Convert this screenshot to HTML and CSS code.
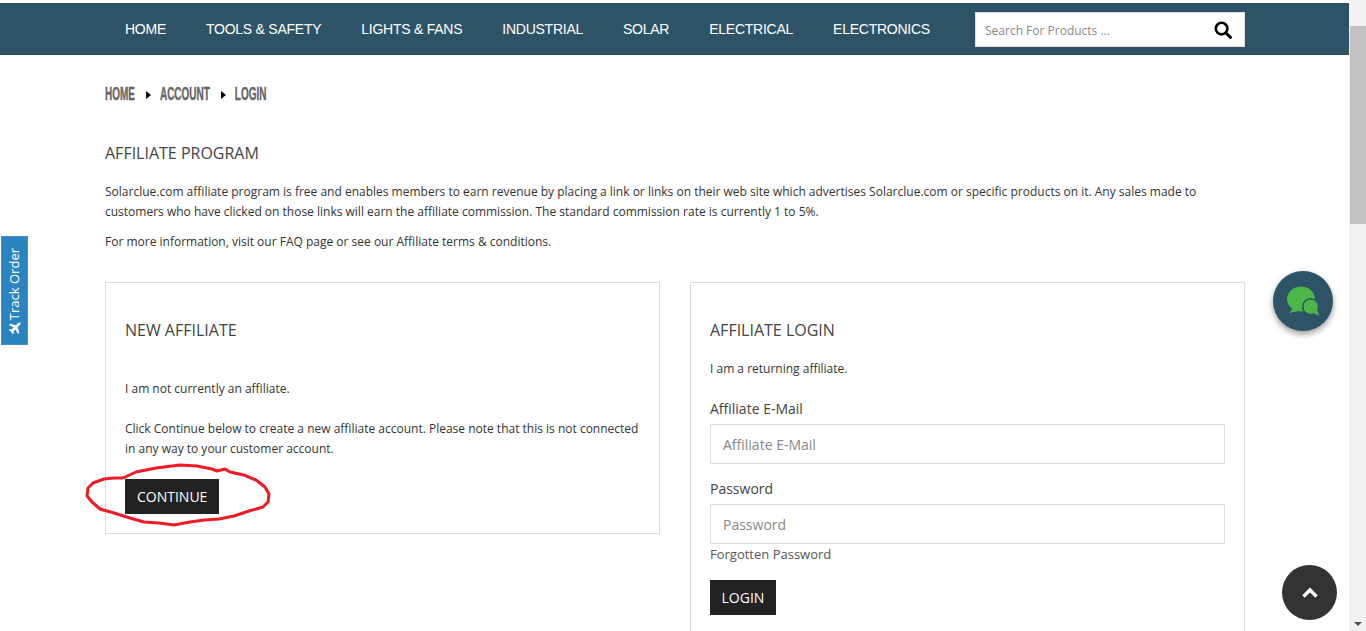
FILE: index.html
```html
<!DOCTYPE html>
<html lang="en">
<head>
<meta charset="utf-8">
<title>Affiliate Program</title>
<link rel="stylesheet" href="styles.css">
</head>
<body>
<div class="frame">
  <div class="page">
    <header class="topbar">
      <nav class="nav">
        <a>HOME</a><a>TOOLS &amp; SAFETY</a><a>LIGHTS &amp; FANS</a><a>INDUSTRIAL</a><a>SOLAR</a><a>ELECTRICAL</a><a>ELECTRONICS</a>
      </nav>
      <div class="search">
        <span class="search-text">Search For Products ...</span>
        <svg class="search-icon" viewBox="0 0 18 18" width="18" height="18"><circle cx="7.6" cy="7.6" r="5.8" fill="none" stroke="#000" stroke-width="2.6"/><path d="M11.8 11.8L16.4 16.4" stroke="#000" stroke-width="3" stroke-linecap="round"/></svg>
      </div>
    </header>
    <main class="content">
      <div class="crumbs">
        <span>HOME</span><i class="tri"></i><span>ACCOUNT</span><i class="tri"></i><span>LOGIN</span>
      </div>
      <h1 class="title">AFFILIATE PROGRAM</h1>
      <p class="para first">Solarclue.com affiliate program is free and enables members to earn revenue by placing a link or links on their web site which advertises Solarclue.com or specific products on it. Any sales made to customers who have clicked on those links will earn the affiliate commission. The standard commission rate is currently 1 to 5%.</p>
      <p class="para second">For more information, visit our FAQ page or see our Affiliate terms &amp; conditions.</p>
      <div class="cols">
        <section class="card card-new">
          <h2 class="card-title">NEW AFFILIATE</h2>
          <p class="para gap-a">I am not currently an affiliate.</p>
          <p class="para gap-b">Click Continue below to create a new affiliate account. Please note that this is not connected in any way to your customer account.</p>
          <a class="btn btn-continue">CONTINUE</a>
        </section>
        <section class="card card-login">
          <h2 class="card-title">AFFILIATE LOGIN</h2>
          <p class="para gap-c">I am a returning affiliate.</p>
          <label class="lbl">Affiliate E-Mail</label>
          <div class="input">Affiliate E-Mail</div>
          <label class="lbl lbl-pass">Password</label>
          <div class="input">Password</div>
          <div class="forgot">Forgotten Password</div>
          <a class="btn btn-login">LOGIN</a>
        </section>
      </div>
    </main>
    <svg class="scribble" viewBox="0 0 190 66" width="190" height="66"><path d="M39 15L52 9 72 5 96 2 113 3 128 6 133 8 141 6 146 9 160 12 172 17 181 24 185 31 184 39 179 44 165 48 150 53 135 56 120 57 106 59 90 62 75 60 60 59 46 55 30 50 16 46 8 39 3 33 4 25 9 20 20 16 30 15Z" fill="none" stroke="#ed1c24" stroke-width="3" stroke-linejoin="round"/></svg>
    <a class="track"><svg class="plane" viewBox="0 0 14 14" width="13" height="13"><path d="M13.4 1.2C12.7.3 11.4.5 10.4 1.5L8.3 3.6 2.4 1.9 1.1 3.2 5.9 6 3.900 8 1.900 7.700.9 8.700 3.400 10.600 5.300 13.100 6.300 12.100 6 10.100 8 8.100 10.800 12.900 12.100 11.600 10.400 5.700 12.500 3.600C13.500 2.600 14 1.900 13.400 1.200Z" fill="#fff"/></svg><span class="track-text">Track Order</span></a>
    <a class="chat"><svg viewBox="0 0 34 30" width="34" height="30"><ellipse cx="15" cy="13" rx="14" ry="12.500" fill="#4cb648"/><path d="M8 21L3 27 13 25Z" fill="#4cb648"/><circle cx="24.700" cy="20.700" r="8" fill="#4cb648" stroke="#2f5366" stroke-width="1.600"/><path d="M27 27L33.500 29.500 31 24Z" fill="#4cb648"/></svg></a>
    <a class="totop"><svg viewBox="0 0 18 12" width="18" height="12"><path d="M2.500 9.500L9 3l6.500 6.500" fill="none" stroke="#fff" stroke-width="3.400"/></svg></a>
  </div>
  <div class="scrollbar">
    <div class="thumb"></div>
    <div class="arrow-down"></div>
  </div>
</div>
</body>
</html>
```
FILE: styles.css
```css
* { box-sizing: border-box; }
html, body { margin: 0; height: 100%; overflow: hidden; background: #fff; }
body { font-family: "Open Sans", sans-serif; color: #333; }
.frame { display: flex; height: 631px; }
.page { flex: 1; position: relative; overflow: hidden; padding-top: 3px; }
.topbar { height: 52px; background: #2f5366; display: flex; align-items: flex-start; padding-left: 125px; }
.nav { display: flex; gap: 40px; font: 14px/53px "Liberation Sans", Arial, sans-serif; letter-spacing: -.25px; color: #fff; width: 850px; }
.search { width: 270px; height: 35px; margin-top: 9px; background: #fff; border: 1px solid #e0e0e0; display: flex; align-items: center; justify-content: space-between; padding: 0 12px 0 9px; }
.search-text { font-size: 12px; color: #888; padding-top: 2px; }
.search-icon { display: block; }
.content { width: 1140px; margin-left: 105px; }
.crumbs { display: flex; align-items: center; height: 22px; margin-top: 28px; font: 700 18px/22px "Liberation Sans", sans-serif; color: #666; -webkit-text-stroke: .4px #666; transform: scaleX(.555); transform-origin: left center; width: 200%; }
.tri { width: 0; height: 0; border-left: 9px solid #000; border-top: 4.5px solid transparent; border-bottom: 4.5px solid transparent; margin: 1px 16px 0 20px; }
.title { margin: 37px 0 0; font-weight: 400; font-size: 16px; line-height: 22px; color: #444; }
.para { margin: 0; font-size: 12px; line-height: 20px; color: #333; }
.para.first { margin-top: 18px; }
.para.second { margin-top: 10px; }
.cols { display: flex; gap: 30px; margin-top: 30px; align-items: flex-start; }
.card { width: 555px; border: 1px solid #ddd; padding: 0 19px; }
.card-new { height: 252px; }
.card-login { height: 400px; }
.card-title { margin: 36px 0 0; font-weight: 400; font-size: 16px; line-height: 22px; color: #444; }
.gap-a { margin-top: 38px; }
.gap-b { margin-top: 20px; }
.gap-c { margin-top: 18px; }
.btn { display: inline-block; background: #222; color: #fff; font-size: 14px; }
.btn-continue { margin-top: 20px; height: 35px; line-height: 35px; padding: 0 12px; }
.btn-login { margin-top: 16px; height: 35px; line-height: 35px; padding: 0 11.5px; }
.lbl { display: block; margin-top: 20px; font-size: 14px; line-height: 20px; color: #444; }
.lbl-pass { margin-top: 15px; }
.input { margin-top: 5px; height: 40px; border: 1px solid #ddd; padding: 0 12px; font-size: 14px; line-height: 40px; color: #888; }
.forgot { font-size: 13px; line-height: 20px; color: #555; }
.scribble { position: absolute; left: 84px; top: 463px; }
.track { position: absolute; left: 1px; top: 236px; width: 27px; height: 109px; background: #2a84c2; border: 1px solid #3d8fc4; display: flex; flex-direction: column-reverse; align-items: center; justify-content: flex-start; padding: 0 1px 9px 0; gap: 2px; }
.plane { display: block; flex: none; }
.track-text { writing-mode: vertical-rl; transform: rotate(180deg); font-size: 13px; line-height: 25px; color: #fff; white-space: nowrap; }
.chat { position: absolute; left: 1273px; top: 271px; width: 60px; height: 60px; border-radius: 50%; background: #2f5366; box-shadow: 0 3px 6px rgba(0,0,0,.4); display: flex; align-items: center; justify-content: center; }
.totop { position: absolute; left: 1282px; top: 565px; width: 55px; height: 55px; border-radius: 50%; background: #333; display: flex; align-items: center; justify-content: center; }
.scrollbar { width: 17px; flex: none; background: #f1f1f1; position: relative; }
.thumb { position: absolute; left: 1px; right: 0; top: 26px; height: 198px; background: #c1c1c1; }
.arrow-down { position: absolute; left: 5px; bottom: 5px; width: 0; height: 0; border-top: 4px solid #505050; border-left: 4px solid transparent; border-right: 4px solid transparent; }
```
